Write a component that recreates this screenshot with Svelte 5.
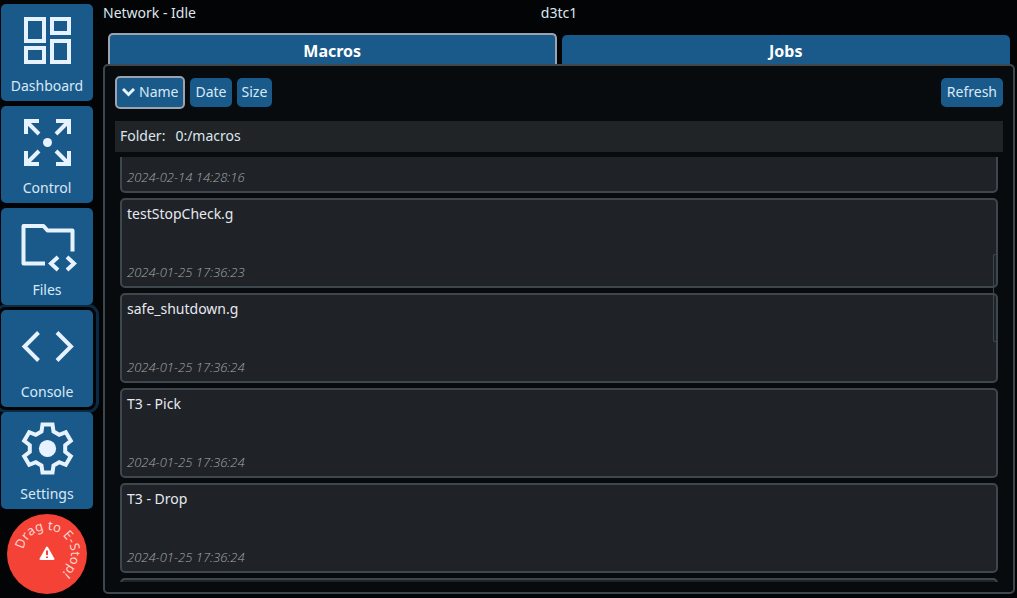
<script lang="ts">
    import { onMount } from 'svelte';

    const nav = ['Dashboard', 'Control', 'Files', 'Console', 'Settings'];
    const tabs = ['Macros', 'Jobs'];
    const sorts = ['Name', 'Date', 'Size'];

    const macros = [
        { name: '', date: '2024-02-14 14:28:16' },
        { name: 'testStopCheck.g', date: '2024-01-25 17:36:23' },
        { name: 'safe_shutdown.g', date: '2024-01-25 17:36:24' },
        { name: 'T3 - Pick', date: '2024-01-25 17:36:24' },
        { name: 'T3 - Drop', date: '2024-01-25 17:36:24' },
        { name: '', date: '' }
    ];

    let page = $state('Console');
    let tab = $state('Macros');
    let sort = $state('Name');
    let listEl: HTMLElement;

    // Six teeth, each given by four corners and turned around the hub.
    const tooth = [[-6, -17], [-5, -24], [5, -24], [6, -17]];
    const gear = [0, 60, 120, 180, 240, 300]
        .flatMap((deg) => {
            const a = (deg * Math.PI) / 180;
            return tooth.map(([x, y]) => {
                const px = 28.5 + x * Math.cos(a) - y * Math.sin(a);
                const py = 27.5 + x * Math.sin(a) + y * Math.cos(a);
                return `${px.toFixed(1)},${py.toFixed(1)}`;
            });
        })
        .join(' ');

    onMount(() => {
        listEl.scrollTop = 54;
    });
</script>

<div class="app">
    <nav>
        {#each nav as item}
            <button class="nav-btn" class:current={page === item} onclick={() => (page = item)}>
                <svg width="56" height="56" viewBox="0 0 56 56" aria-hidden="true">
                    {#if item === 'Dashboard'}
                        <rect x="7" y="6" width="18" height="22" />
                        <rect x="33" y="6" width="17" height="14" />
                        <rect x="7" y="35" width="18" height="14" />
                        <rect x="33" y="28" width="17" height="21" />
                    {:else if item === 'Control'}
                        <path d="M20 6H7v13M7 6l13 13M37 6h13v13M50 6L37 19M20 49H7V36M7 49l13-13M37 49h13V36M50 49L37 36" />
                        <circle class="solid" cx="28.5" cy="27.5" r="4.5" />
                    {:else if item === 'Files'}
                        <path class="round" d="M26 46.500H4.500V9h20l4 4.500h25v21" />
                        <path d="M39 40l-7 6.500 7 6.500M48 40l7 6.500-7 6.500" />
                    {:else if item === 'Console'}
                        <path d="M19.500 13.500L5.500 27.500l14 14M38 13.500l14 14-14 14" />
                    {:else}
                        <polygon points={gear} />
                        <circle class="solid" cx="28.5" cy="27.5" r="8.6" />
                    {/if}
                </svg>
                <span>{item}</span>
            </button>
        {/each}
        <button class="estop" aria-label="Drag to E-Stop!">
            <svg width="80" height="80" viewBox="0 0 80 80">
                <path id="estop-arc" d="M16.500 35.500A24 24 0 1 1 40 64" fill="none" />
                <text><textPath href="#estop-arc">Drag to E-Stop!</textPath></text>
                <path class="warn" d="M40 33.500L46.500 45h-13z" />
                <path class="mark" d="M40 36.500v4.500M40 42.500v1.500" />
            </svg>
        </button>
    </nav>

    <main>
        <header>
            <span>Network - Idle</span>
            <span>d3tc1</span>
        </header>

        <div class="tabs" role="tablist">
            {#each tabs as t}
                <button role="tab" aria-selected={tab === t} class:active={tab === t} onclick={() => (tab = t)}>{t}</button>
            {/each}
        </div>

        <section>
            <div class="toolbar">
                {#each sorts as s}
                    <button class:active={sort === s} onclick={() => (sort = s)}>
                        {#if sort === s}
                            <svg width="13" height="9" viewBox="0 0 13 9" aria-hidden="true">
                                <path d="M1 1l5.500 5.500L12 1" />
                            </svg>
                        {/if}
                        {s}
                    </button>
                {/each}
                <button class="refresh">Refresh</button>
            </div>

            <div class="folder"><span>Folder:</span><span>0:/macros</span></div>

            <div class="list-wrap">
                <ul bind:this={listEl}>
                    {#each macros as macro}
                        <li>
                            <button>
                                <span>{macro.name}</span>
                                <time>{macro.date}</time>
                            </button>
                        </li>
                    {/each}
                </ul>
                <div class="thumb"></div>
            </div>
        </section>
    </main>
</div>

<style>
    :global(body) {
        margin: 0;
        background: #030406;
    }

    .app {
        display: flex;
        gap: 10px;
        height: 100vh;
        box-sizing: border-box;
        padding: 4px 2px 4px 1px;
        color: #dde6ee;
        font-family: 'Noto Sans', sans-serif;
        font-size: 14px;
        line-height: 18px;
        overflow: hidden;
    }

    button {
        box-sizing: border-box;
        margin: 0;
        padding: 0;
        border: 0;
        border-radius: 5px;
        background: #195a8a;
        color: #d9e8f6;
        font: inherit;
        cursor: pointer;
    }

    nav {
        display: flex;
        flex-direction: column;
        align-items: center;
        gap: 5px;
        flex: 0 0 92px;
    }

    .nav-btn {
        display: flex;
        flex-direction: column;
        align-items: center;
        gap: 8px;
        width: 100%;
        padding: 9px 0 6px;
        z-index: 1;
    }

    /* the ring stays under the neighbouring buttons */
    .nav-btn.current {
        z-index: 0;
        outline: 3px solid #0c2a42;
        outline-offset: 3px;
    }

    .nav-btn svg {
        overflow: visible;
        fill: none;
        stroke: #e6f2ff;
        stroke-width: 4;
    }

    .nav-btn .solid {
        fill: #e6f2ff;
        stroke: none;
    }

    .nav-btn .round {
        stroke-linejoin: round;
    }

    .estop {
        width: 80px;
        height: 80px;
        border-radius: 50%;
        background: #f44336;
    }

    .estop svg {
        display: block;
    }

    .estop text {
        fill: #fcd5d2;
        font-size: 13px;
    }

    .warn {
        fill: #fff;
        stroke: #fff;
        stroke-width: 2;
        stroke-linejoin: round;
    }

    .mark {
        stroke: #f44336;
        stroke-width: 2;
    }

    main {
        display: flex;
        flex-direction: column;
        flex: 1;
        min-width: 0;
    }

    header {
        display: grid;
        grid-template-columns: 1fr auto 1fr;
        height: 29px;
    }

    .tabs {
        display: grid;
        grid-template-columns: 1fr 1fr;
        align-items: end;
        gap: 5px;
        padding: 0 5px;
    }

    .tabs button {
        height: 29px;
        padding-top: 3px;
        border-radius: 5px 5px 0 0;
        color: #fff;
        font-size: 16px;
        font-weight: bold;
    }

    .tabs .active {
        height: 31px;
        border: 2px solid #9aa3ae;
        border-bottom: 0;
    }

    section {
        display: flex;
        flex-direction: column;
        flex: 1;
        min-height: 0;
        padding: 10px;
        border: 2px solid #3e474e;
        border-radius: 5px;
        background: #070b0e;
    }

    .toolbar {
        display: flex;
        align-items: center;
        gap: 5px;
        margin-bottom: 12px;
    }

    .toolbar button {
        display: flex;
        align-items: center;
        gap: 4px;
        padding: 5px 5px 6px;
    }

    .toolbar .active {
        border: 2px solid #9aa3ae;
    }

    .toolbar svg {
        fill: none;
        stroke: #e6f2ff;
        stroke-width: 3;
    }

    .toolbar .refresh {
        margin-left: auto;
        padding: 5px 6px 6px;
    }

    .folder {
        display: flex;
        gap: 10px;
        margin-bottom: 5px;
        padding: 6px 5px 7px;
        background: #202427;
    }

    .list-wrap {
        position: relative;
        flex: 1;
        min-height: 0;
    }

    ul {
        display: flex;
        flex-direction: column;
        gap: 5px;
        height: 100%;
        box-sizing: border-box;
        margin: 0;
        padding: 0 5px;
        list-style: none;
        overflow-y: scroll;
        scrollbar-width: none;
    }

    li {
        flex: none;
    }

    li button {
        display: flex;
        flex-direction: column;
        justify-content: space-between;
        width: 100%;
        height: 90px;
        padding: 5px;
        border: 2px solid #3e474e;
        background: #1f2226;
        color: #e6e9f2;
        text-align: left;
    }

    time {
        color: #a2aaae;
        font-family: 'Open Sans', sans-serif;
        font-size: 13px;
        font-style: italic;
        font-weight: 300;
    }

    .thumb {
        position: absolute;
        top: 97px;
        right: 5px;
        width: 4px;
        height: 86px;
        border: 1px solid #3e474e;
        border-right: 0;
        border-radius: 2px 0 0 2px;
    }
</style>
